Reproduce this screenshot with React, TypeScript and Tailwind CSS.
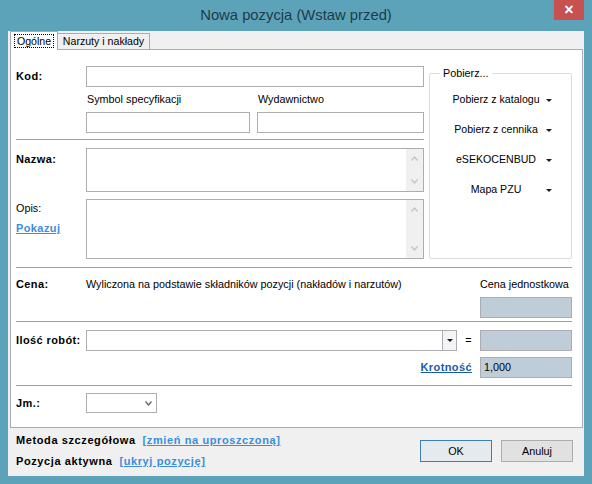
import React from 'react';

const Caret: React.FC = () => (
  <span className="inline-block w-0 h-0 border-l-[3px] border-r-[3px] border-t-[3px] border-l-transparent border-r-transparent border-t-[#1a1a1a]" />
);

const Chevron: React.FC<{ up?: boolean; color?: string }> = ({ up, color = '#c4c4c4' }) => (
  <svg width="7" height="5" viewBox="0 0 7 5">
    <polyline
      points={up ? '0.5,4.5 3.5,1 6.5,4.5' : '0.5,0.5 3.5,4 6.5,0.5'}
      fill="none"
      stroke={color}
      strokeWidth="1.4"
    />
  </svg>
);

const Label: React.FC<{ children: React.ReactNode; className?: string }> = ({ children, className = '' }) => (
  <div className={`w-[70px] shrink-0 font-bold text-[11px] tracking-[0.4px] text-black ${className}`}>{children}</div>
);

const Memo: React.FC<{ h: string }> = ({ h }) => (
  <div className={`${h} w-[338px] border border-[#abadb3] bg-white flex justify-end`}>
    <div className="w-[17px] bg-[#f0f0f0] flex flex-col items-center justify-between py-[7px]">
      <Chevron up />
      <Chevron />
    </div>
  </div>
);

const PickButton: React.FC<{ text: string }> = ({ text }) => (
  <div className="h-[30px] flex items-center pl-[16px]">
    <span className="w-[100px] text-center text-[10.6px] text-black">{text}</span>
    <Caret />
  </div>
);

const Separator: React.FC<{ className?: string }> = ({ className = '' }) => (
  <div className={`h-px bg-[#a0a0a0] ${className}`} />
);

export default function App() {
  return (
    <div className="w-[592px] h-[484px] bg-[#5ca3ba] flex flex-col font-['Liberation_Sans',Arial,sans-serif] select-none">
      {/* title bar */}
      <div className="h-[31px] flex shrink-0">
        <div className="w-[38px]" />
        <div className="flex-1 text-center text-[14.8px] leading-[31px] text-[#1d3c48]">Nowa pozycja (Wstaw przed)</div>
        <div className="w-[38px]">
          <div className="w-[30px] h-[20px] bg-[#c75050] flex items-center justify-center text-white text-[16px] font-bold leading-none">
            ×
          </div>
        </div>
      </div>

      {/* client */}
      <div className="mx-[8px] flex-1 bg-[#f0f0f0] flex flex-col">
        {/* tabs */}
        <div className="h-[18px] pl-[2px] flex items-end shrink-0">
          <div className="relative z-10 -mb-px h-[19px] w-[48px] bg-white border border-b-0 border-[#acacac] flex items-center justify-center">
            <span className="border border-dotted border-black px-[2px] leading-[12px] text-[10.6px] text-black">Ogólne</span>
          </div>
          <div className="h-[16px] w-[92px] border border-l-0 border-b-0 border-[#acacac] bg-[#f0f0f0] flex items-center justify-center text-[10.6px] text-black">
            Narzuty i nakłady
          </div>
        </div>

        {/* tab page */}
        <div className="ml-[2px] mr-px h-[379px] shrink-0 bg-white border border-[#acacac] pl-[5px] pr-[10px] text-[10.8px] text-black">
          <div className="flex">
            {/* left column */}
            <div className="w-[408px] flex flex-col">
              <div className="mt-[16px] h-[21px] flex items-center">
                <Label>Kod:</Label>
                <input className="h-[21px] w-[338px] border border-[#abadb3] bg-white outline-none" />
              </div>
              <div className="h-[25px] flex items-center pl-[71px]">
                <span className="w-[171px]">Symbol specyfikacji</span>
                <span>Wydawnictwo</span>
              </div>
              <div className="h-[21px] flex pl-[70px] gap-[7px]">
                <input className="h-[21px] w-[164px] border border-[#abadb3] bg-white outline-none" />
                <input className="h-[21px] w-[167px] border border-[#abadb3] bg-white outline-none" />
              </div>
              <Separator className="mt-[6px]" />
              <div className="mt-[8px] flex">
                <Label className="pt-[3px]">Nazwa:</Label>
                <Memo h="h-[44px]" />
              </div>
              <div className="mt-[7px] flex">
                <div className="w-[70px] shrink-0 pt-[2px] flex flex-col">
                  <span className="leading-[14px]">Opis:</span>
                  <span className="mt-[6px] font-bold text-[11px] tracking-[0.4px] text-[#3a8edc] underline leading-[14px]">Pokazuj</span>
                </div>
                <Memo h="h-[60px]" />
              </div>
            </div>

            {/* right group */}
            <fieldset className="ml-[5px] mt-[17px] w-[144px] h-[192px] border border-[#dcdcdc] rounded-[2px] px-0 pb-0">
              <legend className="ml-[10px] px-[3px] text-[10.8px] leading-[12px]">Pobierz...</legend>
              <div className="mt-[6px] flex flex-col">
                <PickButton text="Pobierz z katalogu" />
                <PickButton text="Pobierz z cennika" />
                <PickButton text="eSEKOCENBUD" />
                <PickButton text="Mapa PZU" />
              </div>
            </fieldset>
          </div>

          <Separator className="mt-[8px]" />

          {/* cena */}
          <div className="flex pt-[9px]">
            <Label className="leading-[14px]">Cena:</Label>
            <span className="leading-[14px]">Wyliczona na podstawie składników pozycji (nakładów i narzutów)</span>
            <div className="ml-auto w-[92px] flex flex-col">
              <span className="leading-[14px] whitespace-nowrap">Cena jednostkowa</span>
              <div className="mt-[6px] h-[21px] border border-[#abadb3] bg-[#bfcdd9]" />
            </div>
          </div>

          <Separator className="mt-[3px]" />

          {/* ilosc */}
          <div className="mt-[8px] h-[21px] flex items-center">
            <Label>Ilość robót:</Label>
            <input className="h-[21px] w-[357px] border border-[#abadb3] bg-white outline-none" />
            <div className="h-[21px] w-[14px] border border-l-0 border-[#abadb3] bg-[#f4f4f4] flex items-center justify-center">
              <Caret />
            </div>
            <span className="w-[23px] text-center">=</span>
            <div className="h-[21px] w-[92px] border border-[#abadb3] bg-[#bfcdd9]" />
          </div>

          <div className="mt-[6px] h-[21px] flex items-center justify-end">
            <span className="font-bold text-[11px] tracking-[0.4px] text-[#1b5aa6] underline">Krotność</span>
            <div className="ml-[8px] h-[21px] w-[92px] border border-[#abadb3] bg-[#bfcdd9] flex items-center px-[3px]">1,000</div>
          </div>

          <Separator className="mt-[7px]" />

          {/* jm */}
          <div className="mt-[7px] h-[20px] flex items-center">
            <Label>Jm.:</Label>
            <div className="h-[20px] w-[71px] border border-[#abadb3] bg-white flex items-center justify-end pr-[4px]">
              <Chevron color="#6a6a6a" />
            </div>
          </div>
        </div>

        {/* footer */}
        <div className="flex-1 flex pl-[8px] pr-[11px]">
          <div className="pt-[5px] flex flex-col gap-[7px] font-bold text-[11px] tracking-[0.6px] text-black">
            <div className="h-[14px] leading-[14px] flex gap-[7px]">
              <span>Metoda szczegółowa</span>
              <span className="text-[#3a8edc] underline">[zmień na uproszczoną]</span>
            </div>
            <div className="h-[14px] leading-[14px] flex gap-[7px]">
              <span>Pozycja aktywna</span>
              <span className="text-[#3a8edc] underline">[ukryj pozycję]</span>
            </div>
          </div>
          <div className="ml-auto pt-[12px] flex gap-[9px]">
            <button className="h-[22px] w-[72px] border border-[#3c7fb1] bg-[#e5eaee] text-[10.8px] text-black">OK</button>
            <button className="h-[22px] w-[72px] border border-[#acacac] bg-[#e1e1e1] text-[10.8px] text-black">Anuluj</button>
          </div>
        </div>
      </div>

      <div className="h-[8px] shrink-0" />
    </div>
  );
}
